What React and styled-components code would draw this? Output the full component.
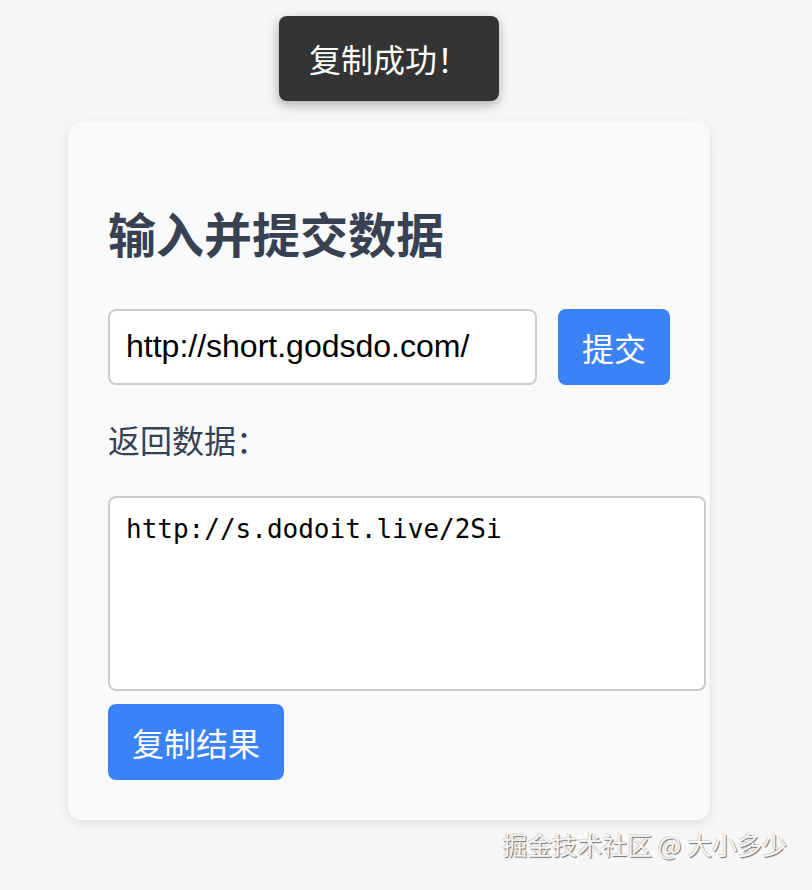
import React, { useState } from "react";
import styled, { createGlobalStyle } from "styled-components";

const GlobalStyle = createGlobalStyle`
  body {
    margin: 0;
    background: #f7f7f7;
    font-family: "Liberation Sans", "Noto Sans CJK SC", sans-serif;
  }
`;

const Page = styled.div`
  min-height: 890px;
  box-sizing: border-box;
  padding: 122px 0 0 68px;
`;

const Stage = styled.div`
  position: relative;
  width: 642px;
`;

const Toast = styled.div`
  position: absolute;
  top: -106px;
  left: 50%;
  transform: translateX(-50%);
  padding: 20px 30px;
  background: #333333;
  color: #ffffff;
  border-radius: 8px;
  box-shadow: 0 4px 12px rgba(0, 0, 0, 0.3);
  font-family: "Noto Sans CJK SC", sans-serif;
  font-size: 32px;
  line-height: 45px;
  white-space: nowrap;
`;

const Card = styled.div`
  box-sizing: border-box;
  width: 642px;
  padding: 40px;
  background: #f9fafb;
  border-radius: 14px;
  box-shadow: 0 4px 12px rgba(0, 0, 0, 0.1);
`;

const Title = styled.h2`
  margin: 42px 0 47px;
  font-family: "Noto Sans CJK SC", sans-serif;
  font-size: 48px;
  line-height: 1.2;
  font-weight: 700;
  color: #374151;
`;

const Row = styled.div`
  display: flex;
  gap: 21px;
`;

const Input = styled.input`
  flex: 1;
  min-width: 0;
  height: 76px;
  box-sizing: border-box;
  padding: 0 16px;
  border: 2px solid #cccccc;
  border-radius: 8px;
  background: #ffffff;
  font-family: "Liberation Sans", Arial, sans-serif;
  font-size: 32px;
  color: #000000;
  outline: none;
`;

const Button = styled.button`
  height: 76px;
  padding: 0 24px;
  border: none;
  border-radius: 8px;
  background: #3b82f6;
  color: #ffffff;
  font-family: "Noto Sans CJK SC", sans-serif;
  font-size: 32px;
  line-height: 44px;
  cursor: pointer;
`;

const Label = styled.div`
  margin: 30px 0 33px;
  font-family: "Noto Sans CJK SC", sans-serif;
  font-size: 32px;
  line-height: 48px;
  color: #374151;
`;

const Output = styled.textarea`
  display: block;
  width: 100%;
  height: 159px;
  margin: 0 0 13px;
  padding: 16px;
  border: 2px solid #cccccc;
  border-radius: 8px;
  background: #ffffff;
  font-family: "DejaVu Sans Mono", monospace;
  font-size: 26px;
  color: #000000;
  resize: none;
  outline: none;
`;

const Watermark = styled.div`
  display: flex;
  justify-content: flex-end;
  padding: 6px 25px 0 0;
  font-family: "Noto Sans CJK SC", sans-serif;
  font-size: 25px;
  line-height: 36px;
  color: #f6f6f6;
  text-shadow: 1px 1px 1px rgba(0, 0, 0, 0.55), -1px -1px 0 rgba(0, 0, 0, 0.15);
`;

export default function App() {
  const [url, setUrl] = useState("http://short.godsdo.com/");
  const [result] = useState("http://s.dodoit.live/2Si");

  return (
    <>
      <GlobalStyle />
      <Page>
        <Stage>
          <Toast>复制成功！</Toast>
          <Card>
            <Title>输入并提交数据</Title>
            <Row>
              <Input value={url} onChange={(e) => setUrl(e.target.value)} />
              <Button>提交</Button>
            </Row>
            <Label>返回数据：</Label>
            <Output value={result} readOnly />
            <Button>复制结果</Button>
          </Card>
        </Stage>
        <Watermark>掘金技术社区 @ 大小多少</Watermark>
      </Page>
    </>
  );
}
